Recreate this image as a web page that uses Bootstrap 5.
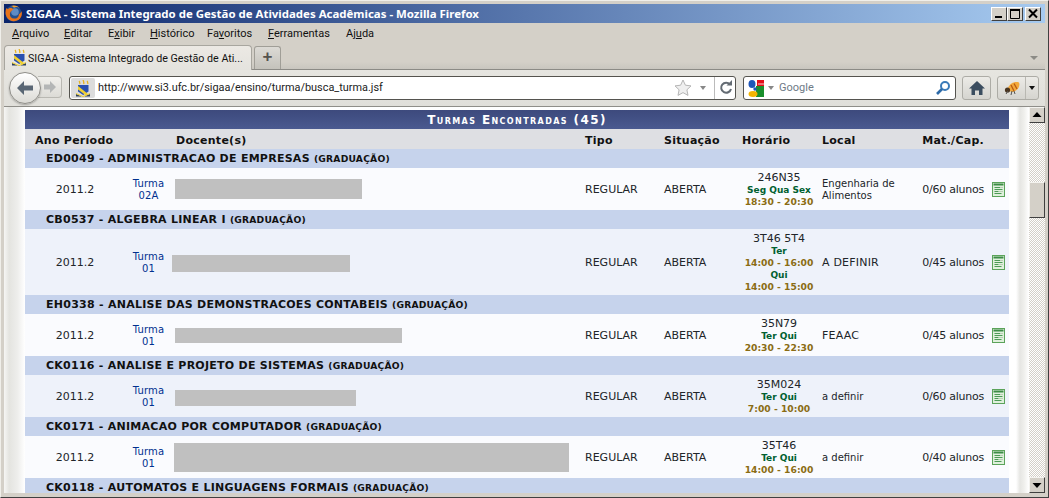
<!DOCTYPE html>
<html lang="pt-BR">
<head>
<meta charset="utf-8">
<title>SIGAA - Sistema Integrado de Gestão de Atividades Acadêmicas - Mozilla Firefox</title>
<link href="https://cdn.jsdelivr.net/npm/bootstrap@5.3.0/dist/css/bootstrap.min.css" rel="stylesheet">
<style>
html,body{margin:0;padding:0;width:1049px;height:498px;overflow:hidden;background:#d4d0c8}
.win{width:1049px;height:498px;background:#d4d0c8;border-top:1px solid #f0efea;border-left:1px solid #f0efea;border-right:1px solid #404040;border-bottom:1px solid #404040;padding:3px 3px 4px 3px;overflow:hidden;font-family:Roboto,"Liberation Sans",sans-serif;color:#111}
.titlebar{height:19px;background:linear-gradient(90deg,#0a246a 0,#a6caf0 100%);color:#fff;font:bold 11.45px/19px "Noto Sans","Liberation Sans",sans-serif;padding-left:1px}
.ttl{margin-left:4px}
.wbtns{gap:0;margin-right:4px}
.wbtn{width:16px;height:14px;background:#d4d0c8;border:1px solid;border-color:#fff #404040 #404040 #fff;line-height:0}
.wbtn svg{display:block}
.wbtn-close{margin-left:2px}
.menubar{height:22px;font-size:11px;line-height:22px;padding-left:8px;color:#111}
.mi-a{width:52px}.mi-b{width:44px}.mi-c{width:42px}.mi-d{width:57px}.mi-e{width:61px}.mi-f{width:78px}
.tabstrip{height:25px;border-bottom:1px solid #8c8b86;background:linear-gradient(180deg,#d4d0c8 0,#d4d0c8 70%,#c9c6bf 100%)}
.tabx{width:248px;height:25px;background:linear-gradient(180deg,#ece9e4,#e4e3de);border:1px solid #a8a69f;border-bottom:0;border-radius:4px 4px 0 0;font-size:10.7px;line-height:23px;padding-left:6px;white-space:nowrap;overflow:hidden;gap:1px}
.plusb{width:27px;height:23px;margin-left:2px;margin-top:1px;background:linear-gradient(180deg,#dcdad5,#c4c2bb);border:1px solid #a09e97;border-bottom:0;border-radius:3px 3px 0 0;color:#55534e;font:bold 17px/19px "Liberation Sans",sans-serif;text-align:center}
.tabdrop{width:0;height:0;border-left:4px solid transparent;border-right:4px solid transparent;border-top:4px solid #8c8b86;margin-right:7px;margin-top:11px}
.navbarx{height:37px;background:linear-gradient(180deg,#e6e5e0,#e0dfda);border-bottom:1px solid #8f8e89;padding-top:6px}
.backb{width:32px;height:32px;border-radius:50%;margin-left:5px;margin-top:-4px;border:1px solid #8f8e89;background:linear-gradient(180deg,#fff,#dcdbd6);box-shadow:0 1px 2px #0004;flex:none;z-index:1;line-height:0}
.fwdb{width:24px;height:22px;margin-left:-3px;border:1px solid #b9b8b2;border-left:0;border-radius:0 4px 4px 0;background:linear-gradient(180deg,#f1f0ec,#dcdbd6);padding-left:4px;flex:none;line-height:0}
.urlb{width:667px;height:24px;margin-left:7px;background:#fff;border:1px solid #55544f;border-radius:3px;font-size:10.9px;line-height:22px;flex:none}
.favbox{width:24px;height:20px;background:#dcdcdc;margin:1px 3px 1px 1px;border-radius:2px;line-height:0;padding:2px 0 0 4px;flex:none}
.urltext{color:#222;white-space:nowrap}
.mini-drop{width:0;height:0;border-left:3.5px solid transparent;border-right:3.5px solid transparent;border-top:4px solid #888}
.reloadc{width:21px;height:22px;border-left:1px solid #bbb;line-height:0;padding:3px 0 0 3px}
.searchb{width:213px;height:24px;margin-left:7px;background:#fff;border:1px solid #55544f;border-radius:3px;font-size:11px;line-height:22px;color:#6e7a86;flex:none;padding-left:4px}
.gword{margin-left:-3px}
.homeb{width:29px;height:24px;margin-left:6px;border:1px solid #adaca6;border-radius:3px;background:linear-gradient(180deg,#ecebe7,#d5d4cf);flex:none;line-height:0;padding:3px 0 0 6px}
.bugb{width:42px;height:24px;margin-left:6px;border:1px solid #adaca6;border-radius:3px;background:linear-gradient(180deg,#ecebe7,#d5d4cf);flex:none;line-height:0}
.bugl{width:28px;padding:3px 0 0 6px;border-right:1px solid #b9b8b2;height:22px}
.bugr{padding:9px 0 0 3px}
.blk-drop{width:0;height:0;border-left:3px solid transparent;border-right:3px solid transparent;border-top:4px solid #111}
.viewport{height:386px;background:#fff;overflow:hidden}
.bandl{width:21px;flex:none;background:linear-gradient(90deg,#f6f6f4 0,#e4e4e0 25%,#eeeeec 65%,#fff 100%)}
.bandr{width:20px;flex:none;background:linear-gradient(90deg,#fff 0,#fff 35%,#e6e6e3 55%,#efefec 75%,#fff 100%)}
.pagew{width:984px;flex:none;padding-top:3px;font:11px/12px "DejaVu Sans",Verdana,sans-serif;color:#222}
.scrollb{width:16px;flex:none;background-color:#f4f3f0;background-image:repeating-conic-gradient(#d4d0c8 0 25%,#fff 0 50%);background-size:2px 2px}
.sbtn{width:16px;height:16px;background:#d4d0c8;border:1px solid;border-color:#f4f3ef #404040 #404040 #f4f3ef;line-height:0;padding:3px 0 0 2px}
.sthumb{width:16px;height:36px;margin-top:59px;background:#d4d0c8;border:1px solid;border-color:#f4f3ef #404040 #404040 #f4f3ef}
.caption-t{height:19px;background:linear-gradient(180deg,#3d4a7d,#404e82 30%,#4a5a90);color:#fff;text-align:center;font-weight:bold;font-variant:small-caps;line-height:19px;padding-top:1px;letter-spacing:1.4px;font-size:12px}
.turmas{width:984px;table-layout:fixed;border-collapse:collapse;margin:0}
.turmas th,.turmas td{padding:0;border:0;color:inherit;background:transparent;box-shadow:none;font-size:11px;line-height:12px;vertical-align:middle}
.turmas .hdr th{height:20px;background:#dedfe3;color:#111;font-weight:bold;letter-spacing:.27px;font-size:11px;padding-top:3px}
.turmas .grp td{height:19px;background:#c6d3ec;color:#111;font-weight:bold;padding:1px 0 0 21px;letter-spacing:.26px}
.grau{font-size:9.2px;letter-spacing:.2px}
.turmas .par td{background:#fafbfe;height:42px}
.turmas .imp td{background:#eef2fa;height:42px}
.turmas .alta td{height:66px}
.turmas .par td:not(.bc),.turmas .imp td:not(.bc){padding-top:1px}
.turmas .ps-ano{padding-left:10px}
.turmas .ps-doc{padding-left:4px}
.turmas .ps-hor{padding-left:4px}
.turmas .par td.loc,.turmas .imp td.loc,.turmas th.loc{padding-left:2px}
.turmas .par td.mat,.turmas .imp td.mat,.turmas th.mat{text-align:right;padding-right:4px;white-space:nowrap}
.turmas .val{letter-spacing:-.25px}
.turmas .ctr{text-align:center}
.turmas .sm{font-size:10px}
.turmas .up{font-size:11px;letter-spacing:.2px}
.lnk{color:#00308f;text-decoration:none;letter-spacing:.2px}
.dias{color:#006030;font-weight:bold;display:block;font-size:9px}
.hora{color:#8a6c14;font-weight:bold;display:block;font-size:9.2px;white-space:nowrap}
.cod{display:block}
.grey{background:#c0c0c0;display:block}
.g1{width:187px;height:20px;margin-left:3px}
.g2{width:178px;height:17px;margin-top:3px}
.g3{width:227px;height:15px;margin-left:3px}
.g4{width:181px;height:16px;margin-left:3px;margin-top:3px}
.g5{width:395px;height:29px;margin-left:2px}
.docic{display:block;margin-left:4px}
</style>
</head>
<body>
<svg width="0" height="0" class="d-block" aria-hidden="true">
  <defs>
    <symbol id="shield" viewBox="0 0 16 18">
      <path d="M4 1c1 1 .5 2 1 3M8 0c1 1.500 .5 2.500 1 4M12 1c1 1 .5 2 1 3" stroke="#e8b320" stroke-width="1.300" fill="none"/>
      <path d="M3 5h10.500v6.500L8.200 15 3 11.500z" fill="#2a50b0"/>
      <path d="M3 6l10 8-2 1.500L3 9.500z" fill="#f0d030"/>
      <path d="M1 14l7 3 7-3v2.500H1z" fill="#30405a"/>
      <path d="M1 13.500l7 3 7-3" stroke="#f0d030" fill="none"/>
    </symbol>
    <symbol id="docg" viewBox="0 0 13 15">
      <rect x=".5" y=".5" width="12" height="14" fill="#dff0dc" stroke="#5ba35a"/>
      <rect x="1.500" y="1.500" width="10" height="2" fill="#3d8c46"/>
      <path d="M2.500 5.500h6M2.500 7.500h8M2.500 9.500h4M2.500 11.500h7" stroke="#4c9a56"/>
      <path d="M7 9.500h4M8 5.500h3" stroke="#b9cfb5"/>
    </symbol>
  </defs>
</svg>
<div class="win d-flex flex-column">
  <div class="titlebar d-flex align-items-center">
    <svg width="17" height="17" viewBox="0 0 17 17" class="flex-shrink-0"><circle cx="8.500" cy="8.500" r="8" fill="#24508f"/><circle cx="10" cy="7" r="3.800" fill="#5f8cc4"/><path d="M1.500 3C-.5 7 .5 12.500 4.500 15c4.500 2.500 10 .8 11.800-3.500.8-2 .7-4 .2-5.500-.5 1.700-1.500 2.800-2.600 3.200.3 2.500-2 4.600-4.800 4.400C6 13.300 4.500 11 5 8.500c.3-1.800 1.600-3.300 3.500-3.800-.5-1-1.600-1.700-3-1.700C4.500 3 3.500 3.500 3 4.300 2.600 3.900 2 3.500 1.500 3z" fill="#e8741a"/><path d="M6 1c3-1.200 7-.3 9 2.500-2.200-1.700-4.500-1.700-6-.8C8 1.800 7 1.200 6 1z" fill="#f3a02c"/></svg>
    <span class="ttl">SIGAA - Sistema Integrado de Gestão de Atividades Acadêmicas - Mozilla Firefox</span>
    <div class="d-flex wbtns ms-auto">
      <div class="wbtn"><svg width="14" height="12" viewBox="0 0 14 12"><rect x="3" y="8" width="7" height="2" fill="#000"/></svg></div>
      <div class="wbtn"><svg width="14" height="12" viewBox="0 0 14 12"><path d="M2.500 1.500h9v9h-9z" fill="none" stroke="#000"/><rect x="2" y="1" width="10" height="2" fill="#000"/></svg></div>
      <div class="wbtn wbtn-close"><svg width="14" height="12" viewBox="0 0 14 12"><path d="M3 1.500l8 8M11 1.500l-8 8" stroke="#000" stroke-width="2"/></svg></div>
    </div>
  </div>
  <div class="menubar d-flex">
    <span class="mi-a"><u>A</u>rquivo</span><span class="mi-b"><u>E</u>ditar</span><span class="mi-c">E<u>x</u>ibir</span><span class="mi-d"><u>H</u>istórico</span><span class="mi-e">Fa<u>v</u>oritos</span><span class="mi-f"><u>F</u>erramentas</span><span>Aj<u>u</u>da</span>
  </div>
  <div class="tabstrip d-flex">
    <div class="tabx d-flex align-items-center">
      <svg width="16" height="18" class="flex-shrink-0"><use href="#shield"/></svg>
      <span>SIGAA - Sistema Integrado de Gestão de Ati...</span>
    </div>
    <div class="plusb">+</div>
    <div class="tabdrop ms-auto"></div>
  </div>
  <div class="navbarx d-flex align-items-start">
    <div class="backb"><svg width="30" height="30" viewBox="0 0 30 30"><path d="M7 15l7-7v4.500h9v5h-9V22z" fill="#5a6775"/></svg></div>
    <div class="fwdb"><svg width="16" height="20" viewBox="0 0 16 20"><path d="M14 10L8 4v3.500H2v5h6V16z" fill="#b4b6b6"/></svg></div>
    <div class="urlb d-flex">
      <div class="favbox"><svg width="16" height="18"><use href="#shield"/></svg></div>
      <span class="urltext">http://www.si3.ufc.br/sigaa/ensino/turma/busca_turma.jsf</span>
      <div class="ms-auto d-flex align-items-center">
        <svg width="18" height="18" viewBox="0 0 18 18"><path d="M9 1l2.400 5.200 5.600.7-4.100 3.900 1.100 5.600L9 13.600 4 16.400l1.100-5.600L1 6.900l5.600-.7z" fill="#efefef" stroke="#b5b5b5"/></svg>
        <div class="mini-drop ms-2 me-1"></div>
        <div class="reloadc ms-1"><svg width="16" height="16" viewBox="0 0 16 16"><path d="M12 4.500A5 5 0 1 0 13 9" fill="none" stroke="#636b73" stroke-width="2"/><path d="M8.500 5.500h5.500V0z" fill="#636b73"/></svg></div>
      </div>
    </div>
    <div class="searchb d-flex align-items-center">
      <svg width="16" height="17" viewBox="0 0 16 17" class="flex-shrink-0"><rect x="9" y="0" width="7" height="7" fill="#e3101a"/><rect x="8" y="6" width="8" height="11" fill="#1a8f2c"/><ellipse cx="4" cy="4" rx="3.500" ry="4" fill="#1e56b8"/><ellipse cx="5" cy="14" rx="4.500" ry="3" fill="#f4b400"/><circle cx="7" cy="9" r="1.700" fill="#1e56b8"/><path d="M10 4h6" stroke="#fff" stroke-width=".8"/></svg>
      <div class="mini-drop ms-1 me-2"></div>
      <span class="gword">Google</span>
      <svg width="16" height="16" viewBox="0 0 16 16" class="ms-auto me-1"><circle cx="10" cy="6" r="4" fill="none" stroke="#3a7ab8" stroke-width="2"/><path d="M7 9l-5 5" stroke="#2d6aa8" stroke-width="2.600"/></svg>
    </div>
    <div class="homeb"><svg width="16" height="16" viewBox="0 0 16 16"><path d="M8 1L0 8.500h2.500V15H6v-4.500h4V15h3.500V8.500H16z" fill="#3b4d5f"/></svg></div>
    <div class="bugb d-flex">
      <div class="bugl"><svg width="17" height="16" viewBox="0 0 17 16"><path d="M4 8C6 3 11 1 15 2.500c1.500 3-1 8-6 9.500C7 12.500 5 11 4 8z" fill="#f2a93c"/><path d="M7 5l3 6M10 3.500l3 5.500" stroke="#b85a14" stroke-width="1.300"/><circle cx="3.500" cy="10" r="2.600" fill="#4a3520"/><path d="M2 14l2-3M7 15l1-4M11 14l-1-3" stroke="#555"/></svg></div>
      <div class="bugr"><div class="blk-drop"></div></div>
    </div>
  </div>
  <div class="viewport d-flex">
    <div class="bandl"></div>
    <div class="pagew">
      <div class="caption-t">Turmas Encontradas (45)</div>
      <table class="table turmas">
        <colgroup><col style="width:100px"><col style="width:47px"><col style="width:413px"><col style="width:79px"><col style="width:74px"><col style="width:82px"><col style="width:100px"><col style="width:68px"><col style="width:21px"></colgroup>
        <thead>
          <tr class="hdr"><th colspan="2" class="ps-ano">Ano Período</th><th class="ps-doc">Docente(s)</th><th>Tipo</th><th>Situação</th><th class="ps-hor">Horário</th><th class="loc">Local</th><th class="mat">Mat./Cap.</th><th></th></tr>
        </thead>
        <tbody>
          <tr class="grp"><td colspan="9">ED0049 - ADMINISTRACAO DE EMPRESAS <span class="grau">(GRADUAÇÃO)</span></td></tr>
          <tr class="par"><td class="ctr">2011.2</td><td class="ctr sm"><a class="lnk" href="#">Turma 02A</a></td><td class="bc"><span class="grey g1"></span></td><td>REGULAR</td><td>ABERTA</td><td class="ctr"><span class="cod">246N35</span><span class="dias">Seg Qua Sex</span><span class="hora">18:30 - 20:30</span></td><td class="loc sm">Engenharia de Alimentos</td><td class="mat val">0/60 alunos</td><td class="bc"><svg class="docic" width="13" height="15"><use href="#docg"/></svg></td></tr>
          <tr class="grp"><td colspan="9">CB0537 - ALGEBRA LINEAR I <span class="grau">(GRADUAÇÃO)</span></td></tr>
          <tr class="imp alta"><td class="ctr">2011.2</td><td class="ctr sm"><a class="lnk" href="#">Turma 01</a></td><td class="bc"><span class="grey g2"></span></td><td>REGULAR</td><td>ABERTA</td><td class="ctr"><span class="cod">3T46 5T4</span><span class="dias">Ter</span><span class="hora">14:00 - 16:00</span><span class="dias">Qui</span><span class="hora">14:00 - 15:00</span></td><td class="loc up">A DEFINIR</td><td class="mat val">0/45 alunos</td><td class="bc"><svg class="docic" width="13" height="15"><use href="#docg"/></svg></td></tr>
          <tr class="grp"><td colspan="9">EH0338 - ANALISE DAS DEMONSTRACOES CONTABEIS <span class="grau">(GRADUAÇÃO)</span></td></tr>
          <tr class="par"><td class="ctr">2011.2</td><td class="ctr sm"><a class="lnk" href="#">Turma 01</a></td><td class="bc"><span class="grey g3"></span></td><td>REGULAR</td><td>ABERTA</td><td class="ctr"><span class="cod">35N79</span><span class="dias">Ter Qui</span><span class="hora">20:30 - 22:30</span></td><td class="loc up">FEAAC</td><td class="mat val">0/45 alunos</td><td class="bc"><svg class="docic" width="13" height="15"><use href="#docg"/></svg></td></tr>
          <tr class="grp"><td colspan="9">CK0116 - ANALISE E PROJETO DE SISTEMAS <span class="grau">(GRADUAÇÃO)</span></td></tr>
          <tr class="imp"><td class="ctr">2011.2</td><td class="ctr sm"><a class="lnk" href="#">Turma 01</a></td><td class="bc"><span class="grey g4"></span></td><td>REGULAR</td><td>ABERTA</td><td class="ctr"><span class="cod">35M024</span><span class="dias">Ter Qui</span><span class="hora">7:00 - 10:00</span></td><td class="loc sm">a definir</td><td class="mat val">0/60 alunos</td><td class="bc"><svg class="docic" width="13" height="15"><use href="#docg"/></svg></td></tr>
          <tr class="grp"><td colspan="9">CK0171 - ANIMACAO POR COMPUTADOR <span class="grau">(GRADUAÇÃO)</span></td></tr>
          <tr class="par"><td class="ctr">2011.2</td><td class="ctr sm"><a class="lnk" href="#">Turma 01</a></td><td class="bc"><span class="grey g5"></span></td><td>REGULAR</td><td>ABERTA</td><td class="ctr"><span class="cod">35T46</span><span class="dias">Ter Qui</span><span class="hora">14:00 - 16:00</span></td><td class="loc sm">a definir</td><td class="mat val">0/40 alunos</td><td class="bc"><svg class="docic" width="13" height="15"><use href="#docg"/></svg></td></tr>
          <tr class="grp"><td colspan="9">CK0118 - AUTOMATOS E LINGUAGENS FORMAIS <span class="grau">(GRADUAÇÃO)</span></td></tr>
        </tbody>
      </table>
    </div>
    <div class="bandr"></div>
    <div class="scrollb d-flex flex-column">
      <div class="sbtn"><svg width="10" height="8" viewBox="0 0 10 8"><path d="M5 1l4.500 5H.5z" fill="#000"/></svg></div>
      <div class="sthumb"></div>
      <div class="sbtn mt-auto"><svg width="10" height="8" viewBox="0 0 10 8"><path d="M5 7L.5 2h9z" fill="#000"/></svg></div>
    </div>
  </div>
</div>
<script src="https://cdn.jsdelivr.net/npm/bootstrap@5.3.0/dist/js/bootstrap.bundle.min.js"></script>
</body>
</html>
